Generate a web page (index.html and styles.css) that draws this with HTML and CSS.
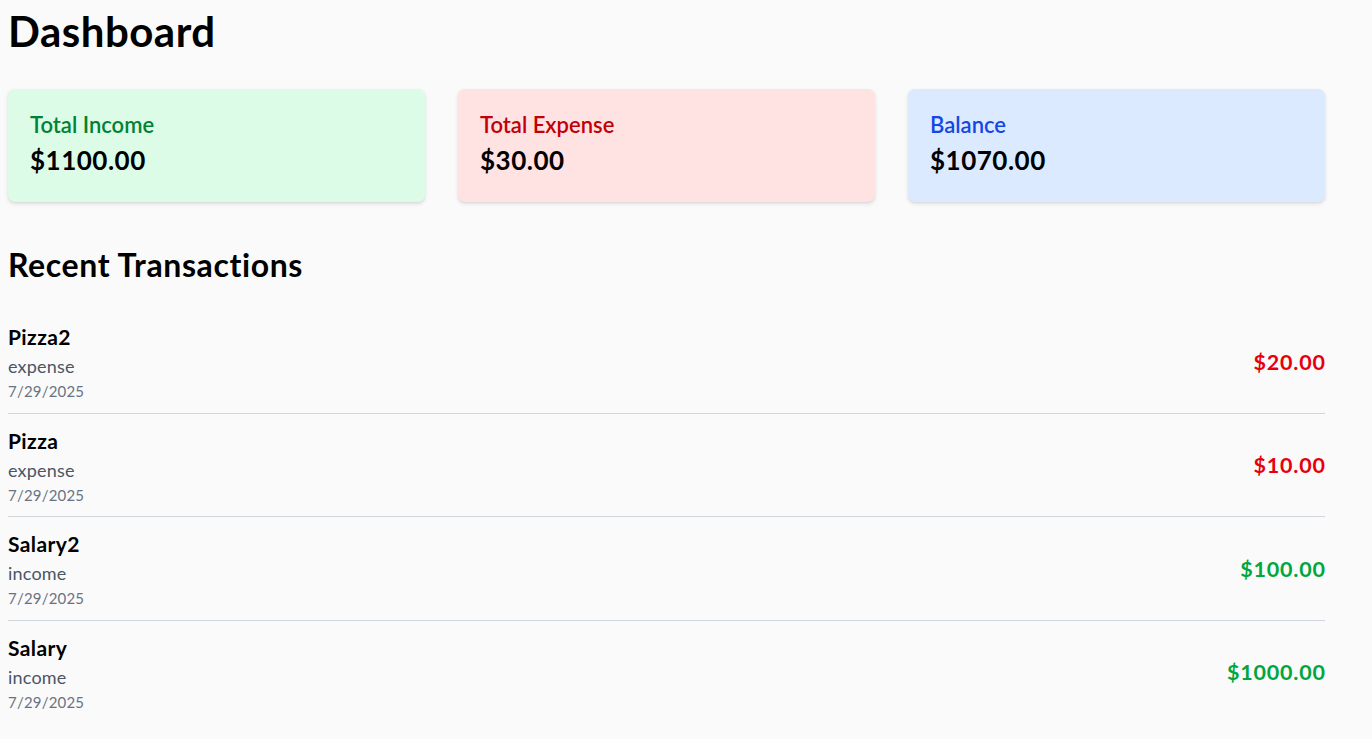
FILE: index.html
```html
<!DOCTYPE html>
<html lang="en">
<head>
<meta charset="utf-8">
<title>Dashboard</title>
<link rel="stylesheet" href="styles.css">
</head>
<body>
<main class="page">
  <h1 class="page-title">Dashboard</h1>
  <section class="summary">
    <div class="card card-income">
      <div class="card-label">Total Income</div>
      <div class="card-value">$1100.00</div>
    </div>
    <div class="card card-expense">
      <div class="card-label">Total Expense</div>
      <div class="card-value">$30.00</div>
    </div>
    <div class="card card-balance">
      <div class="card-label">Balance</div>
      <div class="card-value">$1070.00</div>
    </div>
  </section>
  <h2 class="section-title">Recent Transactions</h2>
  <ul class="tx-list">
    <li class="tx">
      <div class="tx-info">
        <div class="tx-name">Pizza2</div>
        <div class="tx-type">expense</div>
        <div class="tx-date">7/29/2025</div>
      </div>
      <div class="tx-amount tx-amount-expense">$20.00</div>
    </li>
    <li class="tx">
      <div class="tx-info">
        <div class="tx-name">Pizza</div>
        <div class="tx-type">expense</div>
        <div class="tx-date">7/29/2025</div>
      </div>
      <div class="tx-amount tx-amount-expense">$10.00</div>
    </li>
    <li class="tx">
      <div class="tx-info">
        <div class="tx-name">Salary2</div>
        <div class="tx-type">income</div>
        <div class="tx-date">7/29/2025</div>
      </div>
      <div class="tx-amount tx-amount-income">$100.00</div>
    </li>
    <li class="tx">
      <div class="tx-info">
        <div class="tx-name">Salary</div>
        <div class="tx-type">income</div>
        <div class="tx-date">7/29/2025</div>
      </div>
      <div class="tx-amount tx-amount-income">$1000.00</div>
    </li>
  </ul>
</main>
</body>
</html>
```
FILE: styles.css
```css
* { box-sizing: border-box; }
html, body {
  margin: 0;
  padding: 0;
  background: #fafafa;
}
body {
  font-family: Lato, "Noto Sans", sans-serif;
  color: #000;
}
.page {
  width: 1325px;
  padding-left: 8px;
  padding-top: 8px;
}
.page-title {
  margin: 0;
  font-size: 42px;
  line-height: 46px;
  font-weight: 700;
  letter-spacing: 0.5px;
}
.summary {
  display: grid;
  grid-template-columns: repeat(3, 1fr);
  gap: 33px;
  margin-top: 35px;
}
.card {
  height: 113px;
  padding: 22px 22px 26px;
  border-radius: 7px;
  box-shadow: 0 2px 4px rgba(0,0,0,0.10), 0 1px 2px rgba(0,0,0,0.06);
}
.card-income { background: #dcfce7; }
.card-expense { background: #ffe2e2; }
.card-balance { background: #dbeafe; }
.card-label {
  font-size: 22px;
  line-height: 28px;
  font-weight: 600;
}
.card-income .card-label { color: #008236; }
.card-expense .card-label { color: #c10007; }
.card-balance .card-label { color: #1447e6; }
.card-value {
  margin-top: 5px;
  font-size: 26px;
  line-height: 32px;
  font-weight: 700;
  letter-spacing: 0.5px;
}
.section-title {
  margin: 43px 0 0;
  font-size: 32px;
  line-height: 40px;
  font-weight: 700;
  letter-spacing: 0.6px;
}
.tx-list {
  list-style: none;
  margin: 25px 0 0;
  padding: 0;
}
.tx {
  display: flex;
  justify-content: space-between;
  align-items: center;
  padding: 11px 0 10.5px;
  border-bottom: 1px solid #d1d5dc;
}
.tx:last-child { border-bottom: none; }
.tx-name {
  font-size: 21px;
  line-height: 32px;
  font-weight: 700;
  letter-spacing: 0.4px;
}
.tx-type {
  font-size: 18px;
  line-height: 27px;
  color: #4a5565;
  letter-spacing: 0.2px;
}
.tx-date {
  font-size: 15px;
  line-height: 22px;
  color: #6a7282;
  letter-spacing: 0.2px;
}
.tx-amount {
  font-size: 21.5px;
  font-weight: 700;
  letter-spacing: 0.8px;
  margin-right: -0.8px;
}
.tx-amount-expense { color: #e7000b; }
.tx-amount-income { color: #00a63e; }
```
